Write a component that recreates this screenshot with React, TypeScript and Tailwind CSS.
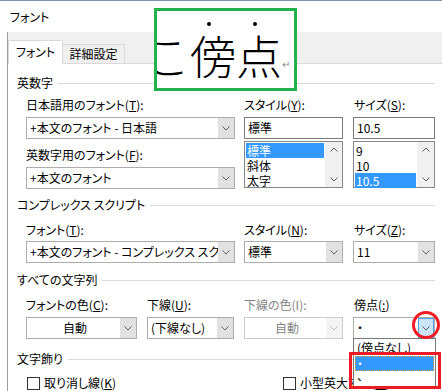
import { clsx } from "clsx";

function Chevron({ up, color = "#606060" }: { up?: boolean; color?: string }) {
    return (
        <svg width="8" height="5" viewBox="0 0 8 5">
            <path d={up ? "M0.5 4.5L4 1L7.5 4.5" : "M0.5 0.5L4 4L7.5 0.5"} fill="none" stroke={color} strokeWidth="1" />
        </svg>
    )
}

interface ComboProps {
    value: React.ReactNode;
    className: string;
    disabled?: boolean;
    focused?: boolean;
    center?: boolean;
}

function Combo({ value, className, disabled, focused, center }: ComboProps) {
    return (
        <div className={clsx("flex h-[22px] border bg-white", disabled ? "border-[#cccccc] text-[#838383]" : "border-[#adadad]", className)}>
            <div className={clsx("flex-1 overflow-hidden whitespace-nowrap pl-[3px] leading-[20px]", center && "text-center")}>{value}</div>
            <div className={clsx("w-[16px] flex items-center justify-center",
                focused ? "bg-[#cce4f7] border border-[#569de5]" : disabled ? "bg-[#f4f4f4]" : "bg-[#e1e1e1]")}>
                <Chevron color={disabled ? "#bfbfbf" : "#606060"} />
            </div>
        </div>
    )
}

function TextBox({ value, className }: { value: string; className: string }) {
    return (
        <div className={clsx("h-[22px] border border-[#7a7a7a] bg-white pl-[3px] leading-[20px]", className)}>{value}</div>
    )
}

function ListBox({ items, selected, className }: { items: string[]; selected: number; className: string }) {
    return (
        <div className={clsx("h-[47px] border border-[#828790] bg-white flex", className)}>
            <div className="flex-1 flex flex-col p-[1px]">
                {items.map((item, i) =>
                    <div key={item} className={clsx("h-[15px] leading-[15px] pl-[1px]", i === selected && "bg-[#3399ff] text-white")}>{item}</div>
                )}
            </div>
            <div className="w-[17px] bg-[#f0f0f0] flex flex-col justify-between items-center py-[5px]">
                <Chevron up />
                <Chevron />
            </div>
        </div>
    )
}

function Section({ title }: { title: string }) {
    return (
        <div className="flex items-center h-[16px] pl-[9px] w-[427px]">
            <span className="leading-[16px] pr-[5px] whitespace-nowrap">{title}</span>
            <div className="flex-1 h-px bg-[#dcdcdc]" />
        </div>
    )
}

function Label({ children, className }: { children: React.ReactNode; className?: string }) {
    return <div className={clsx("h-[16px] leading-[16px] whitespace-nowrap", className)}>{children}</div>
}

function Check({ label }: { label: React.ReactNode }) {
    return (
        <div className="flex items-center gap-[4px]">
            <div className="w-[13px] h-[13px] border border-[#333333] bg-white" />
            <span className="leading-[14px] whitespace-nowrap">{label}</span>
        </div>
    )
}

export default function App() {
    return (
        <div className="relative w-[442px] h-[391px] overflow-hidden bg-white text-black text-[12px] font-['Noto_Sans_CJK_JP',sans-serif] [font-feature-settings:'palt']">
            {/* title bar */}
            <div className="h-[32px] border-t border-[#8094b0] pl-[10px] flex items-center">フォント</div>

            <div className="ml-[7px] h-[359px] border-l border-[#a0a0a0] bg-[#f0f0f0] flex flex-col">
                {/* tabs */}
                <div className="h-[31px] flex items-end">
                    <div className="relative z-[1] -mb-px h-[24px] w-[55px] border border-b-0 border-[#d9d9d9] bg-white flex items-center justify-center pb-[2px]">フォント</div>
                    <div className="h-[19px] w-[62px] border-t border-r border-[#d9d9d9] flex items-center justify-center">詳細設定</div>
                </div>

                <div className="flex-1 bg-white border-t border-[#d9d9d9] pt-[11px]">
                    <Section title="英数字" />
                    <div className="flex pl-[18px] mt-[6px]">
                        <div className="flex flex-col w-[209px]">
                            <Label>日本語用のフォント(<u>T</u>):</Label>
                            <Combo className="w-[209px] mt-[4px]" value="+本文のフォント - 日本語" />
                            <Label className="mt-[8px]">英数字用のフォント(<u>F</u>):</Label>
                            <Combo className="w-[209px] mt-[4px]" value="+本文のフォント" />
                        </div>
                        <div className="flex flex-col ml-[9px]">
                            <Label>スタイル(<u>Y</u>):</Label>
                            <TextBox className="w-[99px] mt-[4px]" value="標準" />
                            <ListBox className="w-[99px] mt-[2px]" items={["標準", "斜体", "太字"]} selected={0} />
                        </div>
                        <div className="flex flex-col ml-[10px]">
                            <Label className="pl-[1px]">サイズ(<u>S</u>):</Label>
                            <TextBox className="w-[82px] mt-[4px]" value="10.5" />
                            <ListBox className="w-[82px] mt-[2px]" items={["9", "10", "10.5"]} selected={2} />
                        </div>
                    </div>

                    <div className="mt-[8px]"><Section title="コンプレックス スクリプト" /></div>
                    <div className="flex pl-[18px] mt-[9px]">
                        <div className="flex flex-col">
                            <Label>フォント(<u>T</u>):</Label>
                            <Combo className="w-[209px] mt-[3px]" value="+本文のフォント - コンプレックス スクリプト" />
                        </div>
                        <div className="flex flex-col ml-[9px]">
                            <Label>スタイル(<u>N</u>):</Label>
                            <Combo className="w-[99px] mt-[3px]" value="標準" />
                        </div>
                        <div className="flex flex-col ml-[10px]">
                            <Label className="pl-[1px]">サイズ(<u>Z</u>):</Label>
                            <Combo className="w-[82px] mt-[3px]" value="11" />
                        </div>
                    </div>

                    <div className="mt-[9px]"><Section title="すべての文字列" /></div>
                    <div className="flex pl-[18px] mt-[9px]">
                        <div className="flex flex-col">
                            <Label>フォントの色(<u>C</u>):</Label>
                            <Combo className="w-[111px] mt-[4px]" value="自動" center />
                        </div>
                        <div className="flex flex-col ml-[10px]">
                            <Label>下線(<u>U</u>):</Label>
                            <Combo className="w-[87px] mt-[4px]" value="(下線なし)" />
                        </div>
                        <div className="flex flex-col ml-[10px]">
                            <Label className="text-[#838383]">下線の色(I):</Label>
                            <Combo className="w-[99px] mt-[4px]" value="自動" center disabled />
                        </div>
                        <div className="flex flex-col ml-[10px]">
                            <Label className="pl-[1px]">傍点(<u>:</u>)</Label>
                            <Combo className="w-[82px] mt-[4px] border-[#7a7a7a]" value="・" focused />
                        </div>
                    </div>

                    <div className="mt-[12px]"><Section title="文字飾り" /></div>
                    <div className="flex pl-[19px] mt-[9px]">
                        <div className="w-[256px]"><Check label={<>取り消し線(<u>K</u>)</>} /></div>
                        <Check label={<>小型英大文字(<u>M</u>)</>} />
                    </div>
                </div>
            </div>

            {/* green annotation: sample */}
            <div className="absolute left-[154px] top-[8px] w-[143px] h-[83px] border-[3px] border-[#22b14c] bg-white overflow-hidden">
                <div className="flex items-end mt-[20px] -ml-[13px] text-[46px] leading-[46px] font-light whitespace-nowrap [font-feature-settings:normal]">
                    <span>こ</span>
                    <span className="relative">傍<span className="absolute left-[17px] -top-[9px] w-[4px] h-[4px] rounded-full bg-black" /></span>
                    <span className="relative">点<span className="absolute left-[17px] -top-[9px] w-[4px] h-[4px] rounded-full bg-black" /></span>
                    <span className="text-[10px] leading-[10px] text-[#8a8a8a] mb-[8px]">↵</span>
                </div>
            </div>

            {/* open dropdown of 傍点 */}
            <div className="absolute left-[353px] top-[338px] w-[83px] border border-[#7a7a7a] bg-white p-[1px]">
                <div className="h-[16px] leading-[16px] pl-[2px]">(傍点なし)</div>
                <div className="h-[15px] leading-[13px] bg-[#3399ff] text-white border border-dotted border-[#e0a050] pl-[1px]">・</div>
                <div className="h-[16px] leading-[10px] pl-[2px]">、</div>
            </div>

            {/* red annotations */}
            <div className="absolute left-[349px] top-[352px] w-[92px] h-[37px] border-[3px] border-[#ed1c24]" />
            <div className="absolute left-[412px] top-[311px] w-[28px] h-[28px] rounded-full border-[3px] border-[#ed1c24]" />
        </div>
    )
}
